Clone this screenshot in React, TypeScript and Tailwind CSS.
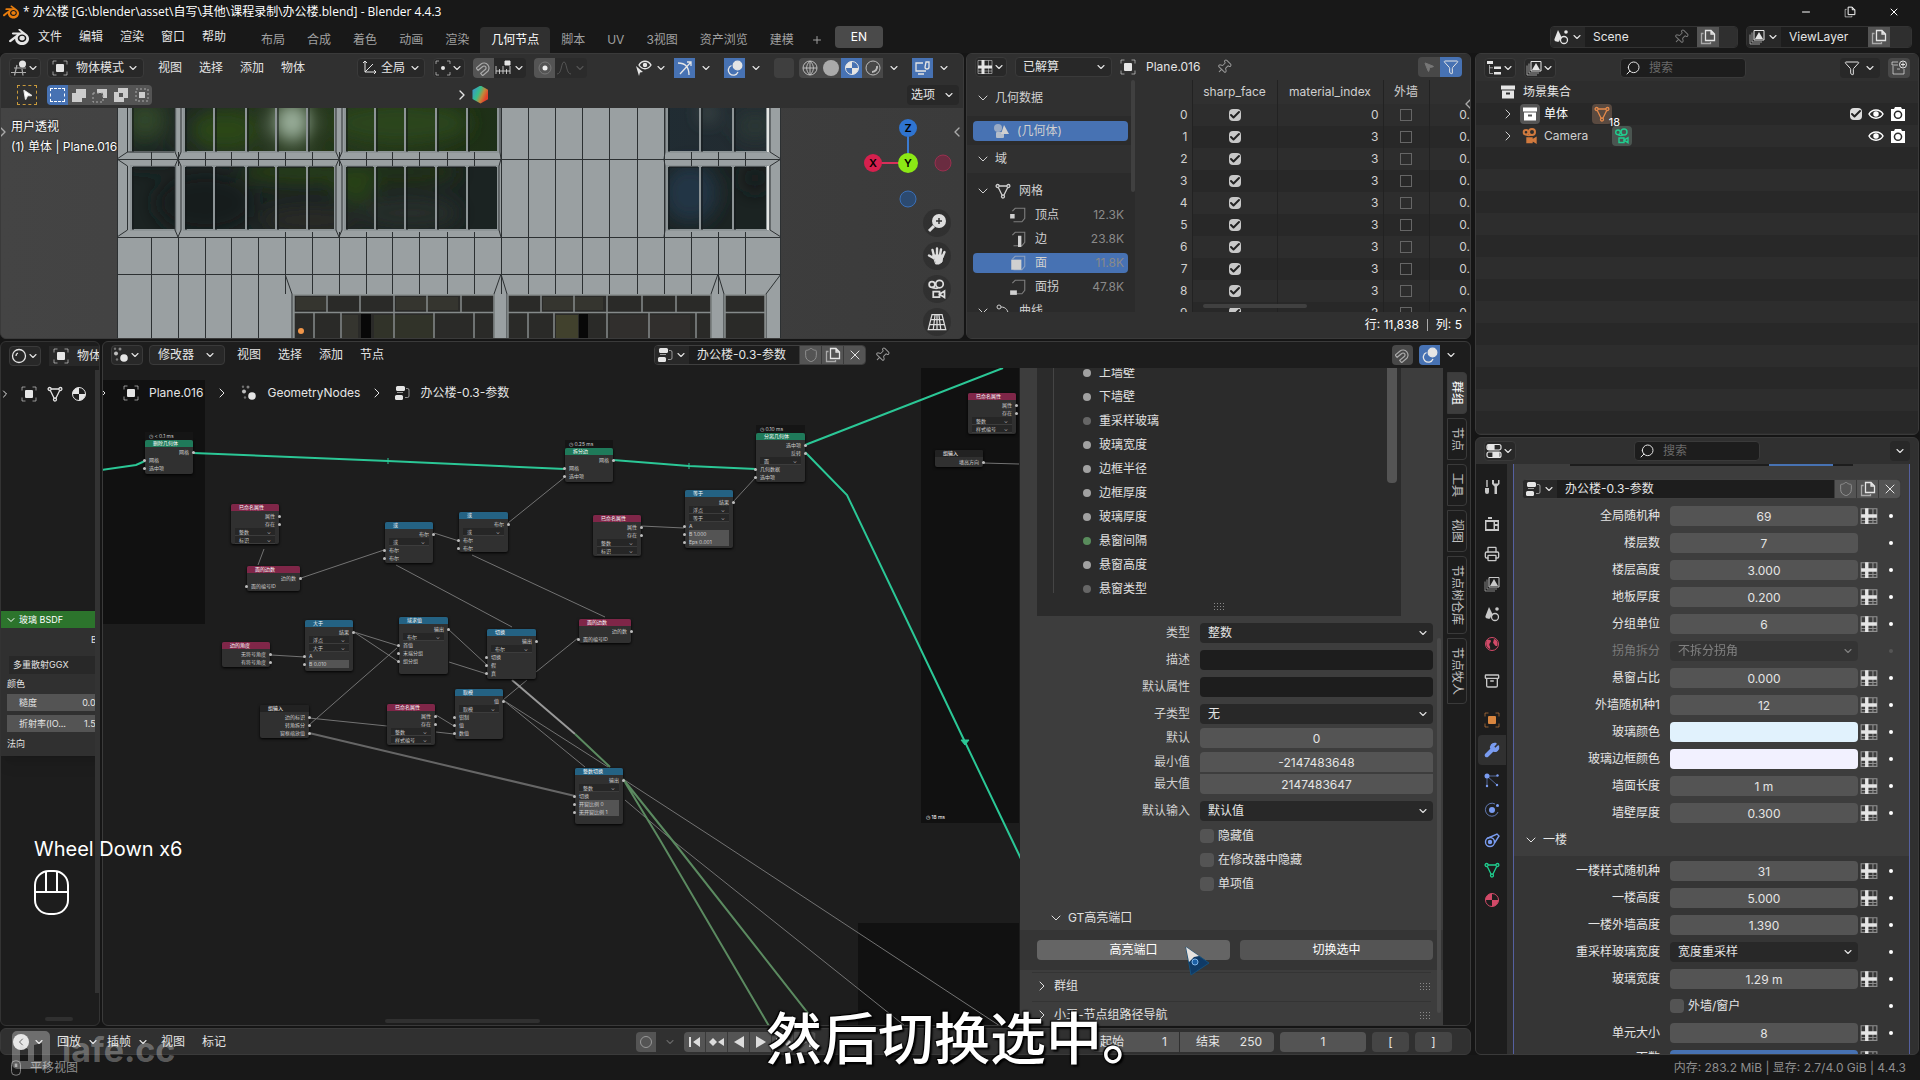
import React from "react";
import { SiBlender } from "react-icons/si";
import {
  Archive,
  Check,
  ChevronDown,
  ChevronLeft,
  ChevronRight,
  Filter,
  Minus,
  MousePointer2,
  Pin,
  Plus,
  Printer,
  Search,
  Shield,
  Wrench,
  X,
} from "lucide-react";

type IconProps = { className?: string };

/* ---------- Icons ---------- */

const ObjectIcon = ({ className = "size-4" }: IconProps) => (
  <svg viewBox="0 0 16 16" className={className} fill="none" stroke="currentColor">
    <rect x="4" y="4" width="8" height="8" rx="1" fill="currentColor" stroke="none" />
    <path d="M1 4.500V1h3.500M11.500 1H15v3.500M15 11.500V15h-3.500M4.500 15H1v-3.500" opacity=".6" />
  </svg>
);

const MeshIcon = ({ className = "size-4" }: IconProps) => (
  <svg viewBox="0 0 16 16" className={className} fill="none" stroke="currentColor" strokeWidth="1.3">
    <path d="M4 3h8M3.300 4.500 7 12M12.700 4.500 9 12" />
    <circle cx="2.600" cy="3" r="1.500" />
    <circle cx="13.400" cy="3" r="1.500" />
    <circle cx="8" cy="13.500" r="1.500" />
  </svg>
);

const MaterialIcon = ({ className = "size-4" }: IconProps) => (
  <svg viewBox="0 0 16 16" className={className} fill="currentColor">
    <circle cx="8" cy="8" r="6.500" fill="none" stroke="currentColor" />
    <path d="M8 8V1.500A6.500 6.500 0 0 0 1.500 8zM8 8v6.500A6.500 6.500 0 0 0 14.500 8z" />
  </svg>
);

const ModifierDotsIcon = ({ className = "size-4" }: IconProps) => (
  <svg viewBox="0 0 16 16" className={className} fill="currentColor">
    <circle cx="3" cy="6.500" r="2" opacity=".8" />
    <circle cx="7" cy="2" r="1.500" opacity=".5" />
    <circle cx="11" cy="11" r="3.800" />
    <circle cx="4" cy="12.500" r="1.200" opacity=".4" />
    <circle cx="2" cy="1.800" r="1.200" opacity=".4" />
  </svg>
);

const NodeTreeIcon = ({ className = "size-4" }: IconProps) => (
  <svg viewBox="0 0 16 16" className={className} fill="currentColor">
    <rect x="2" y="1" width="9" height="5" rx="1.500" />
    <rect x="1" y="10" width="8" height="5" rx="1.500" />
    <path d="M12 3.500h1.500a1.500 1.500 0 0 1 1.500 1.500v6a1.500 1.500 0 0 1-1.500 1.500H11M3 7.500h6" fill="none" stroke="currentColor" opacity=".6" />
  </svg>
);

const SheetIcon = ({ className = "size-4" }: IconProps) => (
  <svg viewBox="0 0 16 16" className={className} fill="none" stroke="currentColor">
    <path d="M1 1.500h14v13H1zM11.500 1.500v13M1 12h14" opacity=".5" />
    <path d="M1 8h14M6 1v14" strokeWidth="3" />
  </svg>
);

const ViewportIcon = ({ className = "size-4" }: IconProps) => (
  <svg viewBox="0 0 16 16" className={className} fill="none" stroke="currentColor" strokeWidth="1.200">
    <circle cx="11.500" cy="4" r="3.500" fill="currentColor" stroke="none" />
    <path d="M3 8h12M0 12.500h15M6 5 3.500 15.500M11 9l1 6.500" opacity=".7" />
  </svg>
);

const SceneIcon = ({ className = "size-4" }: IconProps) => (
  <svg viewBox="0 0 16 16" className={className} fill="currentColor">
    <path d="M5 1 1.500 10c-1 3 6 4 5 1L9 9z" />
    <circle cx="11" cy="11" r="3.500" fill="none" stroke="currentColor" strokeWidth="1.300" />
    <circle cx="13" cy="3" r="1.800" />
  </svg>
);

const LayersIcon = ({ className = "size-4" }: IconProps) => (
  <svg viewBox="0 0 16 16" className={className} fill="none" stroke="currentColor">
    <path d="M5 1.500h10v9.500H5z" />
    <path d="m6 10 4-7 4 7z" fill="currentColor" stroke="none" />
    <path d="M3 3.500v9.500h10M1 5.500V15h10" opacity=".6" />
  </svg>
);

const DuplicateIcon = ({ className = "size-4" }: IconProps) => (
  <svg viewBox="0 0 16 16" className={className} fill="none" stroke="currentColor" strokeWidth="1.300">
    <path d="M5.500 1.500H11L14.500 5v6.500h-9zM11 1.500V5h3.500" />
    <path d="M3.500 4.500h-2v10h9v-1.500" opacity=".6" />
  </svg>
);

const VideoIcon = ({ className = "size-4" }: IconProps) => (
  <svg viewBox="0 0 16 16" className={className} fill="none" stroke="currentColor" strokeWidth="1.400">
    <circle cx="4" cy="4.300" r="2.300" />
    <circle cx="10" cy="4" r="3" />
    <path d="M4 6.600c1.500 1 4 1 5 .4M5 10h5v4.500H5zM10 12.200l4-2.500v5z" />
  </svg>
);

const PhotoIcon = ({ className = "size-4" }: IconProps) => (
  <svg viewBox="0 0 16 16" className={className} fill="currentColor">
    <path fillRule="evenodd" d="M1 3h3l1-2h6l1 2h3v12H1zm7 1.500a4.300 4.300 0 1 0 0 8.600 4.300 4.300 0 0 0 0-8.600zm0 1.500a2.800 2.800 0 1 1 0 5.600A2.800 2.800 0 0 1 8 6z" />
  </svg>
);

const CollectionIcon = ({ className = "size-4" }: IconProps) => (
  <svg viewBox="0 0 16 16" className={className} fill="currentColor">
    <path fillRule="evenodd" d="M1 1.500h14v4H1zM2 6.500h12v8H2zm4 2v2h4v-2z" />
  </svg>
);

const MagnetIcon = ({ className = "size-4" }: IconProps) => (
  <svg viewBox="0 0 16 16" className={className} fill="none" stroke="currentColor" strokeWidth="1.200">
    <path d="M3 14V8a5 5 0 0 1 10 0v6h-3V8a2 2 0 0 0-4 0v6z" transform="rotate(50 8 8)" />
  </svg>
);

const EyeIcon = ({ className = "size-4" }: IconProps) => (
  <svg viewBox="0 0 16 16" className={className} fill="none" stroke="currentColor" strokeWidth="1.500">
    <path d="M1 8c3-5.500 11-5.500 14 0-3 5.500-11 5.500-14 0z" />
    <circle cx="8" cy="8" r="2" fill="currentColor" />
  </svg>
);

const OverlayIcon = ({ className = "size-4" }: IconProps) => (
  <svg viewBox="0 0 16 16" className={className} fill="none" stroke="currentColor" strokeWidth="1.300">
    <circle cx="10.500" cy="5.500" r="4.300" fill="currentColor" />
    <path d="M4.500 5.500A5 5 0 1 0 11 12" />
  </svg>
);

const PropsIcon = ({ className = "size-4" }: IconProps) => (
  <svg viewBox="0 0 16 16" className={className} fill="none" stroke="currentColor" strokeWidth="1.200">
    <rect x="1" y="1.500" width="14" height="5.500" rx="2" />
    <rect x="1" y="9" width="14" height="5.500" rx="2" />
    <path d="M2 2h6v4.500H2zM7 9.500h6V14H7z" fill="currentColor" />
  </svg>
);

const OutlinerIcon = ({ className = "size-4" }: IconProps) => (
  <svg viewBox="0 0 16 16" className={className} fill="currentColor">
    <path d="M1 1h6v3H1zM8 6.500h7V9H8zM8 12h7v2.500H8z" />
    <path d="M3.500 5v8.500H7M3.500 7.800H7" fill="none" stroke="currentColor" opacity=".6" />
  </svg>
);

const Caret = ({ className = "size-3" }: IconProps) => <ChevronDown className={className} strokeWidth={2.2} />;

const GripDots = () => <span className="w-3 h-2 bg-[radial-gradient(#8a8a8a_1px,transparent_1px)] bg-[length:3px_3px]" />;

/* ---------- Small shared controls ---------- */

const IconMenu = ({ label, children, className = "" }: { label: string; children: React.ReactNode; className?: string }) => (
  <button
    aria-label={label}
    className={`w-8 h-5 px-px shrink-0 flex items-center justify-between rounded bg-[#282828] border border-[#3a3a3a] ${className}`}
  >
    {children}
    <Caret />
  </button>
);

const MenuButton = ({ children }: { children: React.ReactNode }) => <button className="px-2 h-5">{children}</button>;

const SearchBox = ({ id }: { id: string }) => (
  <label
    htmlFor={id}
    className="w-[126px] h-5 px-1 flex items-center gap-2 bg-[#1d1d1d] border border-[#3a3a3a] rounded"
  >
    <Search className="size-4 -scale-x-100" strokeWidth={1.5} />
    <input id={id} placeholder="搜索" className="w-20 bg-transparent outline-none placeholder:text-[#6a6a6a]" />
  </label>
);

const NodeGroupPicker = ({ id, className = "" }: { id: string; className?: string }) => (
  <div className={`h-5 flex items-stretch rounded overflow-hidden border border-[#3f3f3f] bg-[#1d1d1d] ${className}`}>
    <button aria-label="浏览节点树" className="w-[34px] flex items-center justify-center gap-[2px] bg-[#282828]">
      <NodeTreeIcon />
      <Caret />
    </button>
    <input id={id} aria-label="节点树" defaultValue="办公楼-0.3-参数" className="min-w-0 flex-1 px-2 bg-transparent outline-none" />
    <button aria-label="伪用户" className="w-[22px] flex items-center justify-center bg-[#545454] border-l border-[#3a3a3a] text-[#8f8f8f]"><Shield className="size-4" strokeWidth={1.5} /></button>
    <button aria-label="复制" className="w-[22px] flex items-center justify-center bg-[#545454] border-l border-[#3a3a3a]"><DuplicateIcon /></button>
    <button aria-label="断开" className="w-[22px] flex items-center justify-center bg-[#545454] border-l border-[#3a3a3a]"><X className="size-4" strokeWidth={1.5} /></button>
  </div>
);

const DropField = ({ id, value, dim = false }: { id: string; value: string; dim?: boolean }) => (
  <div className={`relative flex-1 ${dim ? "opacity-40" : ""}`}>
    <select id={id} disabled={dim} className="w-full h-5 pl-2 appearance-none rounded bg-[#282828] text-[#e5e5e5] opacity-100 outline-none">
      <option>{value}</option>
    </select>
    <Caret className="size-3 absolute right-1 top-1 pointer-events-none" />
  </div>
);

const CheckField = ({ id, label }: { id: string; label: string }) => (
  <div className="flex-1 flex items-center gap-1">
    <input id={id} type="checkbox" className="size-[14px] appearance-none rounded-sm bg-[#545454]" />
    <label htmlFor={id}>{label}</label>
  </div>
);

/* ---------- Top bars ---------- */

const workspaces = ["布局", "合成", "着色", "动画", "渲染", "几何节点", "脚本", "UV", "3视图", "资产浏览", "建模"];

const TopBar = () => (
  <header className="h-[53px] shrink-0 flex flex-col bg-[#181818]">
    <div className="h-6 flex items-center pl-[3px] pr-5 text-white">
      <SiBlender className="size-4 text-[#e87d0d]" />
      <h1 className="ml-1 flex-1 font-normal font-['Open_Sans','Noto_Sans_CJK_SC',sans-serif]">
        * 办公楼 [G:\blender\asset\自写\其他\课程录制\办公楼.blend] - Blender 4.4.3
      </h1>
      <div className="flex items-center gap-8">
        <button aria-label="最小化"><Minus className="size-3" /></button>
        <button aria-label="还原"><DuplicateIcon className="size-3" /></button>
        <button aria-label="关闭"><X className="size-3" /></button>
      </div>
    </div>
    <div className="flex-1 flex items-start pl-[9px] pr-2">
      <div className="h-[25px] flex items-center gap-px">
        <SiBlender className="size-5" />
        {["文件", "编辑", "渲染", "窗口", "帮助"].map((m) => (
          <MenuButton key={m}>{m}</MenuButton>
        ))}
      </div>
      <nav className="ml-4 h-full pt-[3px] flex items-stretch text-[#a0a0a0]">
        {workspaces.map((w) => (
          <button
            key={w}
            className={w === "几何节点" ? "px-[11px] rounded-t bg-[#303030] text-white" : "px-[11px]"}
          >
            {w}
          </button>
        ))}
        <button aria-label="添加工作区" className="pl-[6px] pr-1"><Plus className="size-3" /></button>
      </nav>
      <button className="ml-2 mt-[2px] w-12 h-[22px] rounded bg-[#4a4a4a] text-white">EN</button>
      <div className="ml-auto mt-[2px] flex gap-2 h-[22px]">
        <div className="w-[188px] flex items-center rounded overflow-hidden border border-[#333] bg-[#1d1d1d]">
          <button aria-label="浏览场景" className="w-[34px] h-full flex items-center justify-center gap-[2px] bg-[#282828]">
            <SceneIcon />
            <Caret />
          </button>
          <input aria-label="场景" defaultValue="Scene" className="w-20 px-2 bg-transparent outline-none" />
          <Pin className="size-4 ml-2 mr-2 rotate-45 text-[#777]" strokeWidth={1.5} />
          <button aria-label="新建场景" className="w-[22px] h-full flex items-center justify-center bg-[#545454]"><DuplicateIcon /></button>
          <span className="flex-1 h-full bg-[#2f2f2f]" />
        </div>
        <div className="w-[166px] flex items-center rounded overflow-hidden border border-[#333] bg-[#1d1d1d]">
          <button aria-label="浏览视图层" className="w-[34px] h-full flex items-center justify-center gap-[2px] bg-[#282828]">
            <LayersIcon />
            <Caret />
          </button>
          <input aria-label="视图层" defaultValue="ViewLayer" className="w-[87px] px-2 bg-transparent outline-none" />
          <button aria-label="新建视图层" className="w-[22px] h-full flex items-center justify-center bg-[#545454]"><DuplicateIcon /></button>
          <span className="flex-1 h-full bg-[#2f2f2f]" />
        </div>
      </div>
    </div>
  </header>
);

/* ---------- 3D viewport ---------- */

const seams = [151, 178, 205, 231, 258, 285, 312, 339, 366, 392, 419, 447, 474, 501, 528, 555, 582, 609, 637, 664, 691, 718, 745];
const upperPanes = [
  [131, 176], [184, 214], [214, 246], [246, 276], [276, 307], [307, 335],
  [345, 375], [375, 405], [405, 436], [436, 467], [467, 498],
  [667, 700], [700, 733], [733, 767],
];

const Building = () => (
  <svg className="block" width="965" height="231" viewBox="1 0 965 231">
    <defs>
      <filter id="soft" x="-20%" y="-20%" width="140%" height="140%">
        <feGaussianBlur stdDeviation="9" />
      </filter>
      <linearGradient id="sky" x1="0" x2="1">
        <stop offset="0" stopColor="#22301f" />
        <stop offset=".12" stopColor="#1f2825" />
        <stop offset=".25" stopColor="#26371c" />
        <stop offset=".55" stopColor="#1e3016" />
        <stop offset=".8" stopColor="#202c33" />
        <stop offset="1" stopColor="#232b30" />
      </linearGradient>
      <clipPath id="panes">
        {upperPanes.map(([a, b]) => (
          <React.Fragment key={a}>
            <rect x={a} y="0" width={b - a} height="44" />
            <rect x={a} y="58" width={b - a} height="64" />
          </React.Fragment>
        ))}
      </clipPath>
    </defs>
    <rect x="117" width="664" height="231" fill="#9aa0a2" />
    <g clipPath="url(#panes)">
      <rect x="117" width="664" height="52" fill="url(#sky)" />
      <rect x="117" y="52" width="664" height="75" fill="#1b2322" />
      <g filter="url(#soft)">
        <ellipse cx="145" cy="12" rx="20" ry="18" fill="#33472c" />
        <ellipse cx="150" cy="48" rx="30" ry="12" fill="#192021" />
        <ellipse cx="225" cy="22" rx="35" ry="20" fill="#2c4719" />
        <ellipse cx="292" cy="14" rx="18" ry="20" fill="#9bb09c" />
        <ellipse cx="400" cy="15" rx="70" ry="22" fill="#29441a" />
        <ellipse cx="300" cy="64" rx="60" ry="12" fill="#263d17" />
        <ellipse cx="400" cy="64" rx="60" ry="12" fill="#213318" />
        <ellipse cx="355" cy="75" rx="22" ry="22" fill="#263f18" />
        <ellipse cx="205" cy="95" rx="50" ry="30" fill="#151c1e" />
        <ellipse cx="310" cy="112" rx="50" ry="12" fill="#2b2a26" />
        <ellipse cx="410" cy="105" rx="50" ry="16" fill="#272d2c" />
        <ellipse cx="690" cy="85" rx="28" ry="30" fill="#203444" />
        <ellipse cx="755" cy="70" rx="12" ry="15" fill="#151b1e" />
        <ellipse cx="755" cy="18" rx="20" ry="14" fill="#2a3836" />
        <ellipse cx="708" cy="5" rx="8" ry="8" fill="#4c5652" />
      </g>
    </g>
    <g stroke="#8d9496" strokeWidth="2" fill="none">
      {upperPanes.map(([a, b]) => (
        <React.Fragment key={a}>
          <path d={`M${a} 0V44H${b}V0M${a} 58H${b}V122H${a}z`} />
          <path d={`M${a + 2} 0V44M${a + 2} 59V122M${a + 2} 59H${b - 2}`} stroke="#15191a" strokeWidth="1" />
        </React.Fragment>
      ))}
    </g>
    <path d="M768 0V44M768 58V122M765 187V230" stroke="#e4e6e4" strokeWidth="2" />
    {/* Facade topology */}
    <g stroke="#2c3032" strokeWidth="1" fill="none">
      <path d="M117.500 0V230M780.500 0V230M117 51.500H781M117 129.500H781M117 166.500H781" />
      <path d="M127.500 0V44L117 51L127.500 58V122L117 129M174 44H127M178 51L175 44V0M181 0V44L178 51L175 58V122L178 129L181 122V58L178 51M339 51L336 44V0M342 0V44L339 51L336 58V122L339 129L342 122V58L339 51M500 0V44L501 51L499 58V122L501 129M665 0V44L664 51L665 58V122L664 129M770 0V44L781 51L770 58V122L781 129" />
      {seams.map((x) => (
        <path
          key={x}
          d={x > 490 && x < 670 ? `M${x + 0.5} 0V186` : x < 280 ? `M${x + 0.5} 44V58M${x + 0.5} 129V230` : `M${x + 0.5} 44V58M${x + 0.5} 124V186`}
        />
      ))}
      <path d="M285 166L292 186V230M501 166L494 186V230M501 166L507 186V230M718 166L711 186V230M718 166L724 186V230M781 166L766 186V230" />
    </g>
    {/* Ground floor glazing */}
    <g fill="#2a2a28" stroke="#878c8c" strokeWidth="1.500">
      <rect x="294" y="187" width="200" height="46" />
      <rect x="508" y="187" width="203" height="46" />
      <rect x="725" y="187" width="40" height="46" />
    </g>
    <g fill="#3b3a33" opacity=".7">
      <rect x="296" y="189" width="30" height="13" />
      <rect x="396" y="189" width="62" height="13" />
      <rect x="543" y="189" width="60" height="13" />
      <rect x="342" y="207" width="16" height="23" />
      <rect x="374" y="207" width="60" height="23" fill="#34372a" />
      <rect x="556" y="207" width="22" height="23" fill="#4b4c30" />
      <rect x="610" y="207" width="80" height="23" fill="#343230" />
    </g>
    <path
      d="M294 204.500H494M508 204.500H711M725 204.500H765M327 187V204M360 187V204M394 187V231M427 187V204M461 187V204M541 187V204M574 187V204M607 187V231M642 187V204M676 187V204M314 204V231M341 204V231M434 204V231M474 204V231M528 204V231M554 204V231M649 204V231M696 204V231"
      stroke="#858a8a"
      strokeWidth="1.500"
      fill="none"
    />
    <path d="M361 206h10v25h-10zM579 206h9v25h-9z" fill="#080808" />
    <circle cx="301" cy="223" r="3" fill="#f0964a" />
  </svg>
);

const Gizmo = () => (
  <svg width="90" height="96" viewBox="0 0 90 96" fontSize="11" fontWeight="600" textAnchor="middle">
    <path d="M45 15V46" stroke="#3b7bd0" strokeWidth="2" />
    <path d="M10 46H45" stroke="#d8305a" strokeWidth="2" />
    <circle cx="45" cy="11" r="9" fill="#2f74d0" />
    <circle cx="10" cy="46" r="9" fill="#d6204e" />
    <circle cx="45" cy="46" r="10" fill="#8be815" />
    <circle cx="80" cy="46" r="8" fill="#6a2c40" stroke="#99304f" />
    <circle cx="45" cy="82" r="8" fill="#2c4a70" stroke="#3a70b8" />
    <text x="45" y="15">Z</text>
    <text x="10" y="50">X</text>
    <text x="45" y="50">Y</text>
  </svg>
);

const ShadeButton = ({ label, active = false, children }: { label: string; active?: boolean; children: React.ReactNode }) => (
  <button aria-label={label} className={`w-[21px] h-5 shrink-0 flex items-center justify-center ${active ? "bg-[#4772b3]" : "bg-[#484848]"}`}>
    {children}
  </button>
);

const Viewport = () => (
  <section className="flex-1 min-w-0 flex flex-col bg-[#3d3d3d] rounded-md overflow-hidden border border-[#3a3a3a]">
    <div className="h-[27px] shrink-0 flex items-center pl-2 pr-[13px] bg-[#303030]">
      <IconMenu label="编辑器类型"><ViewportIcon /></IconMenu>
      <button className="ml-[6px] w-[97px] h-5 px-1 flex items-center rounded bg-[#282828] border border-[#3a3a3a]">
        <ObjectIcon />
        <span className="ml-2 flex-1 text-left">物体模式</span>
        <Caret />
      </button>
      <div className="ml-[6px] flex gap-px">
        {["视图", "选择", "添加", "物体"].map((m) => (
          <MenuButton key={m}>{m}</MenuButton>
        ))}
      </div>
      <div className="ml-11 flex gap-2 items-center">
        <button className="h-5 px-[3px] flex items-center gap-1 rounded bg-[#282828] border border-[#3a3a3a]">
          <svg viewBox="0 0 16 16" className="size-4" fill="none" stroke="currentColor"><path d="M4 1v11h11M4 12 12 4M2 3l2-2 2 2M13 10l2 2-2 2" /></svg>
          全局
          <Caret />
        </button>
        <IconMenu label="轴心点">
          <svg viewBox="0 0 16 16" className="size-4" fill="none" stroke="currentColor"><path d="M1 4V1h3M12 1h3v3M15 12v3h-3M4 15H1v-3" opacity=".6" /><circle cx="8" cy="8" r="2" fill="currentColor" stroke="none" /></svg>
        </IconMenu>
        <div className="flex items-center h-5 rounded overflow-hidden bg-[#282828]">
          <button aria-label="吸附" className="w-[21px] h-full flex items-center justify-center bg-[#545454] text-[#aaa]"><MagnetIcon /></button>
          <button aria-label="吸附至" className="w-8 flex items-center justify-center gap-[2px]">
            <svg viewBox="0 0 16 16" className="size-4" fill="none" stroke="currentColor"><path d="M1 6v8M4.500 9v5M8 6v8M11.500 9v5M15 6v8M1 11h14" opacity=".8" /><path d="M10 1h5v4h-5z" fill="currentColor" /></svg>
            <Caret />
          </button>
        </div>
        <div className="flex items-center h-5 rounded overflow-hidden bg-[#2b2b2b] text-[#555]">
          <button aria-label="衰减编辑" className="w-[21px] h-full flex items-center justify-center bg-[#545454] text-[#ccc]">
            <svg viewBox="0 0 16 16" className="size-4" fill="none" stroke="#777"><circle cx="8" cy="8" r="6" /><circle cx="8" cy="8" r="2.500" fill="#eee" stroke="none" /></svg>
          </button>
          <button aria-label="衰减类型" className="w-8 flex items-center justify-center gap-[2px]">
            <svg viewBox="0 0 16 16" className="size-4" fill="none" stroke="currentColor"><path d="M1 14c5 0 4-12 7-12s2 12 7 12" /></svg>
            <Caret />
          </button>
        </div>
      </div>
      <div className="ml-auto flex items-center">
        <button aria-label="可见性" className="w-8 h-5 flex items-center justify-between">
          <svg viewBox="0 0 18 18" className="size-[18px]" fill="none" stroke="currentColor" strokeWidth="1.400">
            <path d="M4 6c3-5 9-5 12 0-3 5-9 5-12 0z" />
            <circle cx="10" cy="6" r="1.500" fill="currentColor" />
            <path d="m1 7 7 6-3 .5L4 17z" fill="currentColor" stroke="none" />
          </svg>
          <Caret />
        </button>
        <div className="ml-[7px] w-[38px] flex items-center justify-between">
          <ShadeButton label="显示辅助" active>
            <svg viewBox="0 0 16 16" className="size-4" fill="none" stroke="currentColor" strokeWidth="1.300"><path d="M1 3c7 0 11 4 11 12M3 14 14 2M10 2h4v4" /></svg>
          </ShadeButton>
          <Caret />
        </div>
        <div className="ml-3 w-[38px] flex items-center justify-between">
          <ShadeButton label="叠加层" active><OverlayIcon /></ShadeButton>
          <Caret />
        </div>
        <button aria-label="透视模式" className="ml-3 w-5 h-5 rounded bg-[#3f3f3f]" />
        <div className="ml-[5px] flex items-center h-5 rounded overflow-hidden">
          <ShadeButton label="线框">
            <svg viewBox="0 0 16 16" className="size-4" fill="none" stroke="#bbb"><circle cx="8" cy="8" r="7" /><path d="M1 8h14M8 1v14M8 1c-4.500 4-4.500 10 0 14M8 1c4.500 4 4.500 10 0 14" /></svg>
          </ShadeButton>
          <ShadeButton label="实体"><span className="size-4 rounded-full bg-[#aaa]" /></ShadeButton>
          <ShadeButton label="材质预览" active><MaterialIcon /></ShadeButton>
          <ShadeButton label="渲染预览">
            <svg viewBox="0 0 16 16" className="size-4" fill="none" stroke="#bbb"><circle cx="8" cy="8" r="7" /><path d="M12 6a5 5 0 0 1-5 6" strokeWidth="2" /></svg>
          </ShadeButton>
          <span className="w-[21px] flex justify-center"><Caret /></span>
        </div>
        <div className="ml-2 w-[38px] flex items-center justify-between">
          <ShadeButton label="合成器" active>
            <svg viewBox="0 0 16 16" className="size-4" fill="none" stroke="currentColor" strokeWidth="1.300"><path d="M8 3H1v8h10M3 14h6M11 2h3v5a2 2 0 0 1-4 0z" /></svg>
          </ShadeButton>
          <Caret />
        </div>
      </div>
    </div>
    <div className="h-[27px] shrink-0 flex items-center pl-4 pr-1 bg-[#303030]">
      <button aria-label="选择工具" className="size-5 flex items-center justify-center border border-dashed border-[#c89a3c]">
        <MousePointer2 className="size-3 fill-white rotate-12" />
      </button>
      <div className="ml-[10px] flex rounded overflow-hidden">
        <button aria-label="新选区" className="w-[21px] h-5 bg-[#4772b3] p-[3px]"><span className="block size-full border border-dashed border-white" /></button>
        <button aria-label="扩展" className="w-[21px] h-5 bg-[#545454] flex items-center justify-center"><svg viewBox="0 0 16 16" className="size-4" fill="#ccc"><path d="M5 2h10v9H11v4H1V6h4z" /></svg></button>
        <button aria-label="减去" className="w-[21px] h-5 bg-[#545454] flex items-center justify-center"><svg viewBox="0 0 16 16" className="size-4" fill="#ccc"><path d="M5 2h10v9h-4V6H5z" /><path d="M1 6h10v9H1z" fill="none" stroke="#aaa" strokeDasharray="2 2" /></svg></button>
        <button aria-label="差值" className="w-[21px] h-5 bg-[#545454] flex items-center justify-center"><svg viewBox="0 0 16 16" className="size-4" fill="#ccc"><path fillRule="evenodd" d="M5 1h10v10h-4v4H1V5h4zm1 5v4h4V6z" /></svg></button>
        <button aria-label="交集" className="w-[21px] h-5 bg-[#545454] flex items-center justify-center"><svg viewBox="0 0 16 16" className="size-4" fill="#ccc"><path d="M5 5h6v6H5z" /><path d="M2 2h12v12H2z" fill="none" stroke="#aaa" strokeDasharray="2 2" /></svg></button>
      </div>
      <div className="flex-1 flex items-center justify-center pr-[116px]">
        <ChevronRight className="size-4" />
        <span className="ml-[2px] w-4 h-[18px] [clip-path:polygon(50%_0,100%_25%,100%_75%,50%_100%,0_75%,0_25%)] bg-[linear-gradient(115deg,#3a90d0_5%,#36c08a_40%,#c08a3a_60%,#e5402a_80%)]" />
      </div>
      <button className="h-5 px-1 flex items-center gap-2 rounded bg-[#282828]">选项 <Caret /></button>
    </div>
    <div className="relative flex-1 min-h-0 overflow-hidden bg-[linear-gradient(90deg,#444,#3b3b3b)]">
      <Building />
      <div className="absolute left-[10px] top-[9px] leading-5 text-white [text-shadow:0_0_2px_#000]">
        <p>用户透视</p>
        <p>(1) 单体 | Plane.016</p>
      </div>
      <ChevronRight className="absolute -left-[6px] top-4 size-4 text-[#aaa]" />
      <ChevronLeft className="absolute right-[-2px] top-4 size-4 text-[#aaa]" />
      <div className="absolute right-[10px] top-[9px]"><Gizmo /></div>
      <div className="absolute right-3 top-[101px] flex flex-col gap-[5px]">
        {[
          <svg viewBox="0 0 20 20" className="size-5"><circle cx="12" cy="8" r="7" fill="#ddd" /><path d="M7 13 2 18" stroke="#ddd" strokeWidth="3" /><path d="M12 5v6M9 8h6" stroke="#333" strokeWidth="1.500" /></svg>,
          <svg viewBox="0 0 20 20" className="size-5" fill="none" stroke="#ddd" strokeWidth="2.400" strokeLinecap="round"><path d="M7 10 5.500 4M10 9V2.500M13 9l1-5.500M15.500 11l2-5M6.500 12 2 9.500" /><path d="M6 9h10l-1 7-3 2H9z" fill="#ddd" strokeWidth="1" /></svg>,
          <VideoIcon className="size-5" />,
          <svg viewBox="0 0 16 16" className="size-5" fill="none" stroke="currentColor"><path d="M4 2h8l3 12H1zM3 6h10M2 10h12M8 2v12M6.500 2 5 14M9.500 2 11 14" /></svg>,
        ].map((icon, i) => (
          <button key={i} aria-label={["缩放", "平移", "相机", "透视/正交"][i]} className="size-7 rounded-full bg-[#2c2c2c]/70 flex items-center justify-center text-[#ddd]">
            {icon}
          </button>
        ))}
      </div>
    </div>
  </section>
);

/* ---------- Spreadsheet ---------- */

const domains = [
  { name: "顶点", count: "12.3K", shape: "M1 7h4v4H1z" },
  { name: "边", count: "23.8K", shape: "M8 5h3v10H8z" },
  { name: "面", count: "11.8K", shape: "M2 5h9v9H2z" },
  { name: "面拐", count: "47.8K", shape: "M1 11h6v4H1z" },
];

const Spreadsheet = () => (
  <section className="w-[505px] shrink-0 flex flex-col bg-[#2b2b2b] rounded-md overflow-hidden border border-[#3a3a3a]">
    <div className="h-[26px] shrink-0 flex items-center pl-2 pr-2 bg-[#303030]">
      <IconMenu label="编辑器类型"><SheetIcon /></IconMenu>
      <button className="ml-2 w-[97px] h-5 px-[7px] pr-1 flex items-center justify-between rounded bg-[#282828] border border-[#3a3a3a]">
        已解算
        <Caret />
      </button>
      <ObjectIcon className="ml-2 size-4" />
      <span className="ml-[10px]">Plane.016</span>
      <Pin className="ml-4 size-4 rotate-45 text-[#999]" strokeWidth={1.5} />
      <div className="ml-auto flex rounded overflow-hidden">
        <button aria-label="仅选中项" className="w-[22px] h-5 bg-[#484848] flex items-center justify-center text-[#777]"><MousePointer2 className="size-3 fill-current" /></button>
        <button aria-label="筛选" className="w-[22px] h-5 bg-[#4772b3] flex items-center justify-center"><Filter className="size-4" strokeWidth={1.5} /></button>
      </div>
    </div>
    <div className="flex-1 min-h-0 flex">
      <div className="relative w-[168px] shrink-0 overflow-hidden text-[#d0d0d0]">
        <div className="h-9 flex items-center pl-2 gap-1 bg-[#303030]"><ChevronDown className="size-4" strokeWidth={1.5} />几何数据</div>
        <button className="ml-[6px] mt-[5px] w-[155px] h-5 rounded-sm bg-[#4772b3] flex items-center pl-5 gap-2">
          <svg viewBox="0 0 16 16" className="size-4" fill="currentColor"><circle cx="5" cy="5" r="4" opacity=".6" /><path d="m11 2 5 9H8z" /><rect x="3" y="9" width="8" height="6" rx="1" opacity=".8" /></svg>
          (几何体)
        </button>
        <div className="mt-1 h-7 flex items-center pl-2 gap-1 bg-[#303030]"><ChevronDown className="size-4" strokeWidth={1.5} />域</div>
        <div className="mt-1 h-7 flex items-center pl-2 gap-1"><ChevronDown className="size-4" strokeWidth={1.5} /><MeshIcon /><span className="ml-1">网格</span></div>
        {domains.map((d) => (
          <button
            key={d.name}
            className={`ml-[6px] w-[155px] h-5 mb-1 rounded-sm flex items-center pl-9 pr-1 ${d.name === "面" ? "bg-[#4772b3]" : ""}`}
          >
            <svg viewBox="0 0 16 16" className="size-[18px]" fill="currentColor"><path d={d.shape} /><path d="M3 4.500 5.500 2H14v9l-2.500 3H4" fill="none" stroke="currentColor" opacity=".5" /></svg>
            <span className="ml-2 flex-1 text-left">{d.name}</span>
            <span className="text-[#8a8a8a]">{d.count}</span>
          </button>
        ))}
        <div className="h-5 flex items-center pl-2 gap-1">
          <ChevronDown className="size-4" strokeWidth={1.5} />
          <svg viewBox="0 0 16 16" className="size-4" fill="none" stroke="currentColor"><circle cx="4" cy="4" r="2" /><path d="M6 4c5 0 7 3 8 10" /></svg>
          <span className="ml-1">曲线</span>
        </div>
        <span className="absolute right-0 top-0 w-1 h-28 rounded bg-[#404040]" />
      </div>
      <div className="relative flex-1 min-w-0 overflow-hidden">
        <table className="w-full table-fixed border-collapse text-[#d0d0d0]">
          <thead>
            <tr className="h-6 bg-[#303030]">
              <th className="w-[57px]" />
              <th className="w-[85px] font-normal border-x border-[#222]">sharp_face</th>
              <th className="w-[106px] font-normal border-r border-[#222]">material_index</th>
              <th className="w-[46px] font-normal border-r border-[#222]">外墙</th>
              <th />
            </tr>
          </thead>
          <tbody>
            {Array.from({ length: 10 }, (_, i) => (
              <tr key={i} className="h-[22px] even:bg-[#282828] odd:bg-[#2d2d2d]">
                <td className="pr-1 text-right bg-[#303030]">{i}</td>
                <td className="border-x border-[#222]">
                  <span className="mx-auto size-3 flex items-center justify-center rounded-sm bg-[#c8c8c8] text-[#222]"><Check className="size-3" strokeWidth={4} /></span>
                </td>
                <td className="pr-1 text-right border-r border-[#222]">{i === 0 ? 0 : 3}</td>
                <td className="border-r border-[#222]"><span className="block mx-auto size-3 border border-[#666]" /></td>
                <td className="text-right">0.</td>
              </tr>
            ))}
          </tbody>
        </table>
        <ChevronLeft className="absolute right-[-6px] top-4 size-4 text-[#aaa]" />
        <span className="absolute left-[68px] bottom-1 w-[104px] h-1 rounded bg-[#404040]" />
      </div>
    </div>
    <div className="h-[26px] shrink-0 flex items-center justify-end gap-2 pr-2 bg-[#303030] text-white">
      <span>行: 11,838</span>
      <span className="w-px h-3 bg-[#aaa]" />
      <span>列: 5</span>
    </div>
  </section>
);

/* ---------- Shader editor sliver ---------- */

const ShaderStrip = () => (
  <section className="relative w-[100px] shrink-0 flex flex-col bg-[#1d1d1d] rounded-md overflow-hidden border border-[#333]">
    <div className="h-[27px] shrink-0 flex items-center gap-2 pl-2 whitespace-nowrap">
      <IconMenu label="编辑器类型"><svg viewBox="0 0 16 16" className="size-4" fill="none" stroke="currentColor" strokeWidth="1.300"><circle cx="8" cy="8" r="6.500" /><path d="M5 8a3 3 0 0 1 2-3" /></svg></IconMenu>
      <span className="flex items-center gap-2 h-5 pl-1 bg-[#282828]"><ObjectIcon /> 物体</span>
    </div>
    <div className="h-[50px] shrink-0 flex items-center gap-[10px] whitespace-nowrap">
      <ChevronRight className="size-3 shrink-0 -ml-[2px]" />
      <ObjectIcon className="size-4 shrink-0" />
      <MeshIcon className="size-4 shrink-0" />
      <MaterialIcon className="size-4 shrink-0 -ml-[2px]" />
      <ChevronLeft className="size-3 shrink-0 -ml-[6px]" />
    </div>
    <div className="mt-[192px] w-[106px] bg-[#303030] shadow-lg text-[9px]">
      <div className="h-[17px] flex items-center gap-[2px] bg-[#2c742c] text-white"><ChevronDown className="ml-1 size-3" />玻璃 BSDF</div>
      <div className="h-6 pl-[90px] flex items-center">BSDF</div>
      <div className="ml-2 mt-1 h-[18px] pl-1 flex items-center bg-[#282828]">多重散射GGX</div>
      <div className="h-5 pl-[6px] flex items-center">颜色</div>
      <div className="ml-[6px] h-[17px] pl-3 flex items-center justify-between bg-[#545454]">糙度<span>0.000</span></div>
      <div className="ml-[6px] mt-1 h-[17px] pl-3 flex items-center justify-between bg-[#545454] whitespace-nowrap">折射率(IO...<span>1.500</span></div>
      <div className="h-6 pl-[6px] flex items-center">法向</div>
    </div>
    <span className="absolute right-0 top-7 bottom-8 w-1 bg-[#333]" />
    <span className="absolute left-11 bottom-1 w-7 h-1 rounded bg-[#303030]" />
  </section>
);

/* ---------- Node canvas ---------- */

// Canvas pan: nodes and links share one coordinate space
const PAN = { x: 103, y: 368 };

const headerColors = {
  geo: "bg-[#1f7a5a]",
  input: "bg-[#7f2648]",
  math: "bg-[#246283]",
  group: "bg-[#222]",
};

type GraphNode = {
  x: number;
  y: number;
  w: number;
  h: number;
  kind: keyof typeof headerColors;
  title: string;
  outs: string[];
  boxes?: string[];
  ins?: string[];
  time?: string;
};

const nodes: GraphNode[] = [
  { x: 145, y: 440, w: 48, h: 34, kind: "geo", title: "删除几何体", outs: ["网格"], ins: ["网格", "选中项"], time: "< 0.1 ms" },
  { x: 231, y: 504, w: 48, h: 40, kind: "input", title: "已命名属性", outs: ["属性", "存在"], boxes: ["整数", "标识"] },
  { x: 247, y: 566, w: 53, h: 25, kind: "input", title: "面的边数", outs: ["边的数"], ins: ["面的编号ID"] },
  { x: 385, y: 522, w: 48, h: 41, kind: "math", title: "或", outs: ["布尔"], boxes: ["或"], ins: ["布尔", "布尔"] },
  { x: 459, y: 512, w: 49, h: 40, kind: "math", title: "或", outs: ["布尔"], boxes: ["或"], ins: ["布尔", "布尔"] },
  { x: 222, y: 642, w: 48, h: 25, kind: "input", title: "边的角度", outs: ["无符号角度", "有符号角度"] },
  { x: 305, y: 620, w: 48, h: 51, kind: "math", title: "大于", outs: ["结果"], boxes: ["浮点", "大于"], ins: ["A", "B   0.010"] },
  { x: 399, y: 617, w: 49, h: 57, kind: "math", title: "域求值", outs: ["输出"], boxes: ["布尔"], ins: ["首值", "末端分组", "组分组"] },
  { x: 487, y: 629, w: 49, h: 50, kind: "math", title: "切换", outs: ["输出"], boxes: ["布尔"], ins: ["切换", "假", "真"] },
  { x: 260, y: 705, w: 49, h: 33, kind: "group", title: "组输入", outs: ["边的标识", "转角拆分", "窗框缩放值"] },
  { x: 387, y: 704, w: 48, h: 41, kind: "input", title: "已命名属性", outs: ["属性", "存在"], boxes: ["整数", "样式编号"] },
  { x: 455, y: 689, w: 48, h: 50, kind: "math", title: "取模", outs: ["值"], boxes: ["取模"], ins: ["钳制", "值", "数值"] },
  { x: 565, y: 448, w: 48, h: 34, kind: "geo", title: "拆分边", outs: ["网格"], ins: ["网格", "选中项"], time: "0.25 ms" },
  { x: 593, y: 515, w: 48, h: 41, kind: "input", title: "已命名属性", outs: ["属性", "存在"], boxes: ["整数", "标识"] },
  { x: 685, y: 490, w: 48, h: 58, kind: "math", title: "等于", outs: ["结果"], boxes: ["浮点", "等于"], ins: ["A", "B   1.000", "Eps 0.001"] },
  { x: 756, y: 433, w: 49, h: 49, kind: "geo", title: "分离几何体", outs: ["选中项", "反转"], boxes: ["面"], ins: ["几何数据", "选中项"], time: "0.10 ms" },
  { x: 579, y: 619, w: 52, h: 24, kind: "input", title: "面的边数", outs: ["边的数"], ins: ["面的编号ID"] },
  { x: 575, y: 768, w: 48, h: 56, kind: "math", title: "整数切换", outs: ["输出"], boxes: ["整数"], ins: ["切换", "开窗比例  0", "无开窗比例 1"] },
  { x: 968, y: 393, w: 48, h: 41, kind: "input", title: "已命名属性", outs: ["属性", "存在"], boxes: ["整数", "样式编号"] },
  { x: 935, y: 450, w: 48, h: 17, kind: "group", title: "组输入", outs: ["墙高方向"] },
];

const frames = [
  { x: 102, y: 380, w: 103, h: 244 },
  { x: 921, y: 368, w: 98, h: 455 },
  { x: 858, y: 923, w: 161, h: 110 },
];

const fieldLinks =
  "M508 523L565 477M301 578L384 550M434 533L459 541M396 565L512 627M472 555L605 617M264 549L258 565M271 655L305 657M354 632L399 646M354 632L399 662M448 629L487 665M449 662L487 674M309 718L387 726M309 725L397 648M436 715L454 726M436 732L454 734M503 700L527 680M503 700L585 767M503 700L608 767M641 526L684 528M733 502L756 477M983 463L1019 464M536 672L578 638M623 779L717 840L1000 1026M625 800L672 840L905 1026";

const NodeCard = ({ node }: { node: GraphNode }) => (
  <article
    className="absolute text-[5px] leading-[8px] text-[#ccc] whitespace-nowrap"
    style={{ left: node.x - PAN.x, top: node.y - PAN.y, width: node.w, height: node.h }}
  >
    {node.time && <p className="absolute -top-2 left-0 w-full h-2 pl-1 bg-[#151515]">◷ {node.time}</p>}
    <div className="size-full overflow-hidden bg-[#303030] rounded-[2px] shadow-[0_1px_3px_#000]">
      <h3 className={`h-[7px] pl-2 leading-[7px] text-white ${headerColors[node.kind]}`}>{node.title}</h3>
      <div className="pt-px px-1">
        {node.outs.map((o) => <p key={o} className="text-right">{o}</p>)}
        {node.boxes?.map((b) => (
          <p key={b} className="h-2 pl-1 flex justify-between bg-[#262626] border-b border-[#3c3c3c]">{b}<span className="pr-1">⌄</span></p>
        ))}
        {node.ins?.map((s, i) => <p key={i} className={/\d$/.test(s) ? "bg-[#545454]" : ""}>{s}</p>)}
      </div>
    </div>
    {node.outs.map((o, i) => (
      <i key={o} className="absolute -right-[2px] size-[3px] rounded-full bg-[#bbb]" style={{ top: 11 + i * 8 }} />
    ))}
    {node.ins?.map((s, i) => (
      <i key={i} className="absolute -left-[2px] size-[3px] rounded-full bg-[#bbb]" style={{ top: 11 + (node.outs.length + (node.boxes?.length ?? 0) + i) * 8 }} />
    ))}
  </article>
);

const NodeCanvas = () => (
  <div className="absolute inset-0 overflow-hidden">
    {frames.map((f) => (
      <div key={f.y} className="absolute bg-[#111]" style={{ left: f.x - PAN.x, top: f.y - PAN.y, width: f.w, height: f.h }} />
    ))}
    <svg className="absolute left-0 top-0" width="920" height="660" viewBox={`${PAN.x} ${PAN.y} 920 660`} fill="none">
      <path d={fieldLinks} stroke="#737373" />
      <path d="M309 733L575 796" stroke="#666" strokeWidth="2" />
      <path d="M512 680L575 734" stroke="#999" strokeWidth="2" />
      <path d="M575 734L610 767M623 779L660 840L769 1026M623 779L672 840L818 1026" stroke="#5b8a60" strokeWidth="2" />
      <path
        d="M102 470L136 465L145 461M193 453L388 461L565 469M613 460L689 466L756 469M805 445L1003 368M805 452L847 495L965 742L1012 840L1022 861"
        stroke="#2bc796"
        strokeWidth="2"
      />
      <path d="M388 458v6M689 463v6M961 740h8l-4 5z" stroke="#2bc796" fill="#2bc796" />
    </svg>
    {nodes.map((n, i) => (
      <NodeCard key={i} node={n} />
    ))}
    <p className="absolute left-[823px] top-[445px] text-[5px] leading-[8px] text-white">◷ 18 ms</p>
    <span className="absolute left-[282px] bottom-[2px] w-[155px] h-1 rounded bg-[#303030]" />
  </div>
);

const sockets = [
  { name: "上墙壁", tone: "bg-[#a1a1a1]" },
  { name: "下墙壁", tone: "bg-[#a1a1a1]" },
  { name: "重采样玻璃", tone: "bg-[#666]" },
  { name: "玻璃宽度", tone: "bg-[#a1a1a1]" },
  { name: "边框半径", tone: "bg-[#a1a1a1]" },
  { name: "边框厚度", tone: "bg-[#a1a1a1]" },
  { name: "玻璃厚度", tone: "bg-[#a1a1a1]" },
  { name: "悬窗间隔", tone: "bg-[#598c5c]" },
  { name: "悬窗高度", tone: "bg-[#a1a1a1]" },
  { name: "悬窗类型", tone: "bg-[#666]" },
];

const SideRow = ({ label, id, children }: { label: string; id: string; children: React.ReactNode }) => (
  <div className="flex items-center gap-[10px]">
    <label htmlFor={id} className="w-[153px] text-right text-[#d0d0d0]">{label}</label>
    {children}
  </div>
);

const valueField = "w-full min-w-0 flex-1 h-5 text-center outline-none text-[#e5e5e5]";

const SidePanel = () => (
  <aside className="relative w-[423px] h-full flex flex-col bg-[#3d3d3d] text-[#e0e0e0] overflow-hidden">
    <div className="relative ml-[17px] w-[364px] h-[248px] shrink-0 bg-[#2b2b2b] overflow-hidden">
      <ul className="ml-4 h-[232px] border-l border-[#454545] pl-[29px]">
        {sockets.map((s, i) => (
          <li key={s.name} className={`flex items-center gap-2 h-6 ${i === 0 ? "-mt-[7px]" : ""}`}>
            <span className={`size-2 rounded-full ${s.tone}`} />
            {s.name}
          </li>
        ))}
      </ul>
      <div className="absolute bottom-[6px] left-0 right-0 flex justify-center"><GripDots /></div>
      <span className="absolute right-1 top-0 w-[10px] h-[115px] rounded-b bg-[#545454]" />
    </div>
    <form className="pl-[17px] pr-[10px] mt-[7px] flex flex-col gap-[7px]">
      <SideRow label="类型" id="sock-type"><DropField id="sock-type" value="整数" /></SideRow>
      <SideRow label="描述" id="sock-desc"><input id="sock-desc" className={`${valueField} rounded bg-[#1d1d1d]`} /></SideRow>
      <SideRow label="默认属性" id="sock-attr"><input id="sock-attr" className={`${valueField} rounded bg-[#1d1d1d]`} /></SideRow>
      <SideRow label="子类型" id="sock-sub"><DropField id="sock-sub" value="无" /></SideRow>
      <div className="-mt-[3px]">
        <SideRow label="默认" id="sock-def"><input id="sock-def" defaultValue="0" className={`${valueField} rounded bg-[#545454]`} /></SideRow>
      </div>
      <div className="-mt-[3px] flex flex-col gap-[2px]">
        <SideRow label="最小值" id="sock-min"><input id="sock-min" defaultValue="-2147483648" className={`${valueField} rounded-t bg-[#545454]`} /></SideRow>
        <SideRow label="最大值" id="sock-max"><input id="sock-max" defaultValue="2147483647" className={`${valueField} rounded-b bg-[#545454]`} /></SideRow>
      </div>
      <SideRow label="默认输入" id="sock-input"><DropField id="sock-input" value="默认值" /></SideRow>
      <div className="ml-[163px] flex flex-col gap-2">
        <CheckField id="hide-value" label="隐藏值" />
        <CheckField id="hide-mod" label="在修改器中隐藏" />
        <CheckField id="single" label="单项值" />
      </div>
    </form>
    <button className="mt-4 ml-[28px] h-5 shrink-0 flex items-center gap-1"><ChevronDown className="size-4" strokeWidth={1.5} />GT高亮端口</button>
    <div className="mt-[2px] h-10 shrink-0 pl-[17px] pr-[10px] flex items-center gap-[10px] bg-[#353535]">
      <button className="flex-1 h-5 rounded bg-[#656565] text-white">高亮端口</button>
      <button className="flex-1 h-5 rounded bg-[#545454] text-white">切换选中</button>
    </div>
    {["群组", "小王-节点组路径导航"].map((t) => (
      <button key={t} className="mt-[2px] h-[27px] shrink-0 mx-3 pl-[2px] flex items-center gap-1 text-left border-t border-[#343434]">
        <ChevronRight className="size-4" strokeWidth={1.5} />
        <span className="flex-1">{t}</span>
        <GripDots />
      </button>
    ))}
    <span className="absolute right-[2px] top-[270px] bottom-3 w-1 rounded bg-[#4a4a4a]" />
  </aside>
);

const NodeEditor = () => (
  <section className="flex-1 min-w-0 flex flex-col bg-[#1d1d1d] rounded-md overflow-hidden border border-[#3a3a3a]">
    <div className="h-[26px] shrink-0 flex items-center pl-2 pr-2">
      <IconMenu label="编辑器类型"><ModifierDotsIcon /></IconMenu>
      <button className="ml-[6px] w-[76px] h-5 px-2 flex items-center justify-between rounded bg-[#282828] border border-[#3a3a3a]">修改器<Caret /></button>
      <div className="ml-1 flex gap-px">
        {["视图", "选择", "添加", "节点"].map((m) => (
          <MenuButton key={m}>{m}</MenuButton>
        ))}
      </div>
      <div className="flex-1 flex items-center justify-center pr-[240px]">
        <NodeGroupPicker id="tree-name" className="w-[212px]" />
        <Pin className="ml-2 size-4 rotate-45 text-[#999]" strokeWidth={1.5} />
      </div>
      <button aria-label="吸附" className="w-[21px] h-5 mr-[6px] rounded bg-[#484848] flex items-center justify-center text-[#aaa]"><MagnetIcon /></button>
      <button aria-label="叠加层" className="w-[21px] h-5 rounded-l bg-[#4772b3] flex items-center justify-center"><OverlayIcon /></button>
      <button aria-label="叠加层选项" className="w-[22px] h-5 flex items-center justify-center"><Caret /></button>
    </div>
    <div className="relative flex-1 min-h-0 flex justify-end">
      <NodeCanvas />
      <nav className="absolute left-0 top-[15px] h-5 flex items-center gap-2">
        <ChevronRight className="size-4 -ml-2" strokeWidth={1.5} />
        <span className="ml-1 flex items-center gap-[10px]"><ObjectIcon />Plane.016</span>
        <ChevronRight className="mx-[3px] size-4" strokeWidth={1.5} />
        <span className="flex items-center gap-[10px]"><ModifierDotsIcon />GeometryNodes</span>
        <ChevronRight className="mx-px size-4" strokeWidth={1.5} />
        <span className="flex items-center gap-[10px]"><NodeTreeIcon />办公楼-0.3-参数</span>
      </nav>
      <SidePanel />
      <div className="relative w-[27px] h-full pt-1 pl-1 flex flex-col gap-1 bg-[#1d1d1d]">
        {["群组", "节点", "工具", "视图", "节点树仓库", "节点牧人"].map((t, i) => (
          <button
            key={t}
            className={`w-5 pt-[8px] pb-[8px] flex items-center justify-center rounded-r border border-[#3a3a3a] [writing-mode:vertical-rl] [text-orientation:sideways] ${i === 0 ? "bg-[#3d3d3d] text-white" : "text-[#c0c0c0]"}`}
          >
            {t}
          </button>
        ))}
      </div>
    </div>
  </section>
);

/* ---------- Timeline ---------- */

const Timeline = () => (
  <section className="h-[27px] shrink-0 flex items-center pl-3 pr-[18px] bg-[#303030] rounded-md border border-[#3a3a3a]">
    <button aria-label="编辑器类型" className="w-8 h-5 flex items-center gap-1"><span className="size-4 rounded-full bg-[#ddd] text-[#222] flex items-center justify-center"><ChevronLeft className="size-3" /></span><Caret /></button>
    <button className="ml-3 h-5 flex items-center gap-[6px]">回放<Caret /></button>
    <button className="ml-2 h-5 flex items-center gap-[6px]">插帧<Caret /></button>
    <div className="ml-1 flex gap-px"><MenuButton>视图</MenuButton><MenuButton>标记</MenuButton></div>
    <div className="flex-1 flex items-center justify-center gap-2 pl-[126px]">
      <div className="flex items-center gap-2 text-[#666]">
        <button aria-label="自动插帧" className="w-5 h-5 rounded-l bg-[#545454] flex items-center justify-center"><span className="size-3 rounded-full border border-[#999]" /></button>
        <Caret />
      </div>
      <div className="flex rounded overflow-hidden">
        {["M2 3v10h2V3zM13 3v10L6 8z", "M4 4 8 8l-4 4-4-4zM15 4v8L9 8z", "M13 2v12L3 8z", "M3 2v12l10-6z", "M12 4l4 4-4 4-4-4zM1 4v8l6-4z", "M12 3v10h2V3zM3 3v10l7-5z"].map((d, i) => (
          <button key={d} aria-label={["跳至起点", "上一关键帧", "倒放", "播放", "下一关键帧", "跳至终点"][i]} className="w-[22px] h-5 bg-[#545454] border-r border-[#3a3a3a] flex items-center justify-center">
            <svg viewBox="0 0 16 16" className="size-4" fill="#ddd"><path d={d} /></svg>
          </button>
        ))}
      </div>
    </div>
    <div className="flex gap-[6px] h-5">
      <div className="flex gap-px">
        <label className="w-[87px] px-2 rounded-l bg-[#545454] flex items-center justify-between">起始<input defaultValue="1" className="w-8 text-right pr-1 bg-transparent outline-none" /></label>
        <label className="w-[94px] pl-4 pr-2 rounded-r bg-[#545454] flex items-center justify-between">结束<input defaultValue="250" className="w-9 text-right pr-1 bg-transparent outline-none" /></label>
      </div>
      <input aria-label="当前帧" defaultValue="1" className="w-[86px] rounded bg-[#545454] text-center outline-none" />
      <button className="w-[37px] rounded bg-[#454545]">[</button>
      <button className="w-[37px] rounded bg-[#454545]">]</button>
    </div>
  </section>
);

/* ---------- Outliner ---------- */

const Outliner = () => (
  <section className="h-[382px] shrink-0 flex flex-col bg-[#2a2a2a] rounded-md overflow-hidden border border-[#3a3a3a]">
    <div className="h-[27px] shrink-0 flex items-center pl-2 pr-2 bg-[#303030]">
      <IconMenu label="编辑器类型"><OutlinerIcon /></IconMenu>
      <IconMenu label="显示模式" className="ml-2"><LayersIcon /></IconMenu>
      <div className="flex-1 flex justify-center pr-[30px]"><SearchBox id="outliner-search" /></div>
      <button aria-label="筛选" className="h-5 px-1 flex items-center gap-1 rounded bg-[#282828]"><Filter className="size-4" strokeWidth={1.5} /><Caret /></button>
      <button aria-label="新建集合" className="ml-2 w-[22px] h-5 rounded bg-[#484848] flex items-center justify-center">
        <svg viewBox="0 0 16 16" className="size-4" fill="none" stroke="currentColor"><path d="M7 2H1v3h6M2 6v8h11V9M6 9h3" opacity=".7" /><circle cx="12" cy="4.500" r="3.500" /><path d="M12 2.500v4M10 4.500h4" /></svg>
      </button>
    </div>
    <div className="flex-1 bg-[repeating-linear-gradient(#2d2d2d_0_22px,#282828_22px_44px)]">
      <div className="h-[22px] pl-6 flex items-center gap-[7px]"><CollectionIcon />场景集合</div>
      <div className="h-[22px] pl-6 pr-3 flex items-center text-white">
        <ChevronRight className="size-4 text-[#ccc]" strokeWidth={1.5} />
        <span className="ml-1 size-5 rounded bg-[#555] flex items-center justify-center"><CollectionIcon /></span>
        <span className="ml-1">单体</span>
        <span className="relative ml-6 size-5 rounded bg-[#5a4a40] flex items-center justify-center text-[#e58a4b]">
          <MeshIcon />
          <sub className="absolute -right-2 -bottom-1 text-[11px] leading-3 text-white">18</sub>
        </span>
        <div className="ml-auto flex items-center gap-[6px]">
          <span className="size-3 bg-[#ddd] text-[#222] flex items-center justify-center rounded-sm"><Check className="size-3" strokeWidth={4} /></span>
          <EyeIcon />
          <PhotoIcon />
        </div>
      </div>
      <div className="h-[22px] pl-6 pr-3 flex items-center text-[#d0d0d0]">
        <ChevronRight className="size-4" strokeWidth={1.5} />
        <span className="ml-[6px] text-[#d17a3e]"><VideoIcon className="size-4 [&_path]:fill-current [&_circle]:stroke-[2]" /></span>
        <span className="ml-[6px]">Camera</span>
        <span className="ml-6 size-5 rounded bg-[#4a5550] flex items-center justify-center text-[#1fcf8f]"><VideoIcon /></span>
        <div className="ml-auto flex items-center gap-[6px] text-white"><EyeIcon /><PhotoIcon /></div>
      </div>
    </div>
  </section>
);

/* ---------- Properties ---------- */

type Prop = { label: string; value: string; type?: "select" | "off" | "color" | "check"; plain?: boolean };

const mainProps: Prop[] = [
  { label: "全局随机种", value: "69" },
  { label: "楼层数", value: "7", plain: true },
  { label: "楼层高度", value: "3.000" },
  { label: "地板厚度", value: "0.200" },
  { label: "分组单位", value: "6" },
  { label: "拐角拆分", value: "不拆分拐角", type: "off" },
  { label: "悬窗占比", value: "0.000" },
  { label: "外墙随机种1", value: "12" },
  { label: "玻璃颜色", value: "#e1f2fd", type: "color" },
  { label: "玻璃边框颜色", value: "#f2f1ff", type: "color" },
  { label: "墙面长度", value: "1 m" },
  { label: "墙壁厚度", value: "0.300" },
];

const floorProps: Prop[] = [
  { label: "一楼样式随机种", value: "31" },
  { label: "一楼高度", value: "5.000" },
  { label: "一楼外墙高度", value: "1.390" },
  { label: "重采样玻璃宽度", value: "宽度重采样", type: "select" },
  { label: "玻璃宽度", value: "1.29 m" },
  { label: "外墙/窗户", value: "", type: "check" },
  { label: "单元大小", value: "8" },
];

const PropRow = ({ prop, id }: { prop: Prop; id: string }) => {
  const off = prop.type === "off";
  const bare = prop.plain || off || prop.type === "select" || prop.type === "check";
  return (
    <div className="h-5 flex items-center">
      <label htmlFor={id} className={`w-[146px] pr-[10px] text-right whitespace-nowrap ${off ? "text-[#7a7a7a]" : ""}`}>
        {prop.type === "check" ? "" : prop.label}
      </label>
      {prop.type === "check" && <CheckField id={id} label={prop.label} />}
      {(prop.type === "select" || off) && <DropField id={id} value={prop.value} dim={off} />}
      {prop.type === "color" && (
        <input id={id} type="color" defaultValue={prop.value} className="flex-1 min-w-0 h-5 rounded overflow-hidden appearance-none [&::-webkit-color-swatch-wrapper]:p-0 [&::-webkit-color-swatch]:border-0" />
      )}
      {!prop.type && <input id={id} defaultValue={prop.value} className={`${valueField} rounded bg-[#545454]`} />}
      <span className="w-[22px] flex justify-center">{!bare && <SheetIcon className="size-[18px]" />}</span>
      <span className={`ml-[9px] mr-4 size-1 rounded-full ${off ? "bg-[#555]" : "bg-white"}`} />
    </div>
  );
};

const propTabs = [
  {
    name: "工具",
    gap: "mb-[7px]",
    icon: (
      <svg viewBox="0 0 16 16" className="size-4" fill="currentColor">
        <path d="M2.300 1h1.400v7H2.300zM1 9h4v4a2 2 0 0 1-4 0zM8 1v4l2.500 2.500V15h2.500V7.500L15.500 5V1h-1.500v3.500h-4V1z" />
      </svg>
    ),
  },
  { name: "渲染", icon: <svg viewBox="0 0 16 16" className="size-4" fill="currentColor"><path fillRule="evenodd" d="M1 4h14v11H1zm1.500 2v7h7V6zM11 6v2h2.500V6zm0 4v3h2.500v-3zM4 1h4v2H4z" /></svg> },
  { name: "输出", icon: <Printer className="size-4" /> },
  { name: "视图层", icon: <LayersIcon /> },
  { name: "场景", icon: <SceneIcon /> },
  { name: "世界", color: "text-[#d24a68]", gap: "mb-[7px]", icon: <svg viewBox="0 0 16 16" className="size-4" fill="currentColor"><circle cx="8" cy="8" r="6.500" fill="none" stroke="currentColor" /><path d="M3 4c4-1 5 1 3 3s1 3 0 6C3 12 1 8 3 4zM10 3c4 1 4 5 3 7-3 0-2-2-4-3z" /></svg> },
  { name: "集合", icon: <Archive className="size-4" />, gap: "mb-[9px]" },
  { name: "物体", color: "text-[#d9863f]", icon: <ObjectIcon /> },
  { name: "修改器", color: "text-[#7a9cf0]", icon: <Wrench className="size-4 fill-current" /> },
  { name: "粒子", color: "text-[#7a9cf0]", icon: <svg viewBox="0 0 16 16" className="size-4" fill="currentColor"><circle cx="3" cy="4" r="2.500" /><circle cx="13.500" cy="3.500" r="1.200" /><circle cx="13" cy="13" r="1.200" /><circle cx="3" cy="14" r="1.200" /><path d="M3 4h10M3 4v10M3 4l10 9" stroke="currentColor" opacity=".6" /></svg> },
  { name: "物理", color: "text-[#7a9cf0]", icon: <svg viewBox="0 0 16 16" className="size-4" fill="currentColor"><circle cx="8" cy="8" r="3" /><path d="M11 2A6.500 6.500 0 1 0 14 10" fill="none" stroke="currentColor" opacity=".7" /><circle cx="13.500" cy="3.500" r="1.500" /></svg> },
  { name: "约束", color: "text-[#7a9cf0]", icon: <svg viewBox="0 0 16 16" className="size-4" fill="none" stroke="currentColor" strokeWidth="1.400"><circle cx="6" cy="10" r="4.500" /><circle cx="6" cy="10" r="1.500" fill="currentColor" /><path d="M3 6.500 13 2l2 2-4.500 7" /></svg> },
  { name: "数据", color: "text-[#1fcf8f]", icon: <MeshIcon /> },
  { name: "材质", color: "text-[#d24a68]", icon: <MaterialIcon /> },
];

const Properties = () => (
  <section className="flex-1 min-h-0 flex flex-col bg-[#303030] rounded-md overflow-hidden border border-[#3a3a3a]">
    <div className="h-[26px] shrink-0 flex items-center pl-2 pr-2">
      <IconMenu label="编辑器类型"><PropsIcon /></IconMenu>
      <div className="flex-1 flex justify-center pr-3"><SearchBox id="props-search" /></div>
      <button aria-label="选项" className="h-5 w-5 flex items-center justify-center rounded bg-[#282828]"><Caret /></button>
    </div>
    <div className="flex-1 min-h-0 flex">
      <div className="w-[31px] shrink-0 pt-2 flex flex-col items-center bg-[#1d1d1d] text-[#c8c8c8]">
        {propTabs.map((t) => (
          <button
            key={t.name}
            aria-label={t.name}
            className={`w-[28px] h-[30px] shrink-0 flex items-center justify-center ${t.color ?? ""} ${t.gap ?? ""} ${t.name === "修改器" ? "bg-[#303030] rounded-l" : ""}`}
          >
            {t.icon}
          </button>
        ))}
      </div>
      <div className="ml-[6px] mr-2 flex-1 min-w-0 overflow-hidden border-x border-[#5560a0] bg-[#3d3d3d]">
        <div className="h-[2px] ml-14 mr-14 flex bg-[#1d1d1d]"><span className="ml-auto mr-5 w-16 bg-[#4772b3]" /></div>
        <NodeGroupPicker id="modifier-tree" className="mt-[13px] ml-2 mr-2" />
        <div className="mt-[7px] pl-[10px] flex flex-col gap-[7px]">
          {mainProps.map((p, i) => (
            <PropRow key={p.label} prop={p} id={`main-${i}`} />
          ))}
        </div>
        <button className="mt-[6px] ml-[9px] h-[22px] flex items-center gap-1"><ChevronDown className="size-4" strokeWidth={1.5} />一楼</button>
        <div className="mt-[5px] pt-[5px] pl-[10px] pb-5 flex flex-col gap-[7px] bg-[#353535]">
          {floorProps.map((p, i) => (
            <PropRow key={p.label} prop={p} id={`floor-${i}`} />
          ))}
          <div className="h-5 flex">
            <span className="w-[146px] pr-[10px] text-right">面数</span>
            <span className="flex-1 rounded bg-[#4772b3]" />
            <span className="w-[22px] flex justify-center"><SheetIcon className="size-[18px]" /></span>
            <span className="w-[29px]" />
          </div>
        </div>
      </div>
    </div>
  </section>
);

/* ---------- App ---------- */

const App = () => {
  return (
    <div className="relative h-screen w-full flex flex-col overflow-hidden bg-[#151515] text-[#e5e5e5] text-[12px] leading-4 font-['Inter','Noto_Sans_CJK_SC',sans-serif]">
      <TopBar />
      <div className="flex-1 min-h-0 flex gap-1 pr-px">
        <main className="flex-1 min-w-0 flex flex-col gap-[2px]">
          <div className="h-[286px] shrink-0 flex gap-[2px]">
            <Viewport />
            <Spreadsheet />
          </div>
          <div className="flex-1 min-h-0 flex gap-[2px]">
            <ShaderStrip />
            <NodeEditor />
          </div>
          <Timeline />
        </main>
        <div className="w-[444px] shrink-0 flex flex-col gap-[2px]">
          <Outliner />
          <Properties />
        </div>
      </div>
      <footer className="h-[25px] shrink-0 flex items-center justify-between pl-[10px] pr-[14px] bg-[#181818] text-[#8f8f8f]">
        <span className="flex items-center gap-2">
          <svg viewBox="0 0 12 18" className="w-3 h-4" fill="none" stroke="currentColor"><rect x="1" y="1" width="10" height="16" rx="4" /><path d="M6 4v4" strokeWidth="3" /></svg>
          平移视图
        </span>
        <span>内存: 283.2 MiB | 显存: 2.7/4.0 GiB | 4.4.3</span>
      </footer>

      {/* Input display over the editors */}
      <div className="absolute left-[34px] bottom-[165px] text-white">
        <p className="text-[20px] leading-6">Wheel Down x6</p>
        <svg className="mt-[9px] block" width="35" height="45" viewBox="0 0 35 45" fill="none" stroke="#fff" strokeWidth="2">
          <rect x="1" y="1" width="33" height="43" rx="14" />
          <path d="M1 22H34M12 1V22M23 1V22" />
        </svg>
      </div>

      {/* Watermark */}
      <div className="absolute left-3 bottom-[10px] flex items-center gap-3 text-white/30 font-bold text-[34px] leading-10">
        <svg width="38" height="38" viewBox="0 0 38 38" fill="currentColor"><path fillRule="evenodd" d="M5 0h28a5 5 0 0 1 5 5v28a5 5 0 0 1-5 5H5a5 5 0 0 1-5-5V5a5 5 0 0 1 5-5zm3 14v16h8V18zm14 0v16h8V12z" /></svg>
        lafe.cc
      </div>

      <p className="absolute left-[766px] bottom-[5px] text-[56px] leading-[72px] font-medium text-white [text-shadow:0_0_3px_#000,2px_2px_2px_#000,-1px_-1px_1px_#000]">
        然后切换选中。
      </p>

      {/* Pointer */}
      <svg className="absolute left-[1185px] top-[946px]" width="26" height="31" viewBox="0 0 26 31">
        <path d="M1 1 6 29 24 17z" fill="#0f3a66" stroke="#14507c" />
        <path d="M1 1 4 16 9 11 14 10z" fill="#e8e4e0" />
        <circle cx="10" cy="16" r="3" fill="#1b5fa5" stroke="#7fb3e6" />
      </svg>
    </div>
  );
};

export default App;
